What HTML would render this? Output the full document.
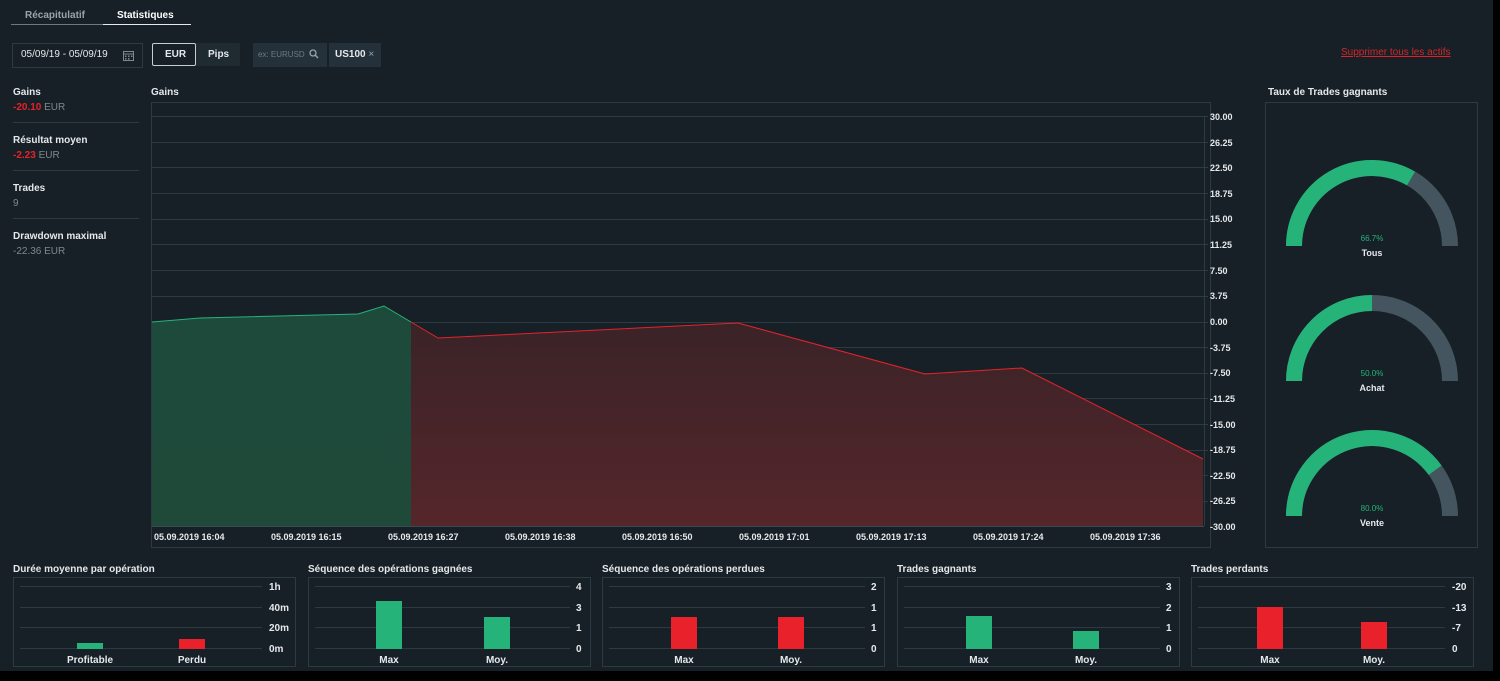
<!DOCTYPE html><html><head><meta charset="utf-8"><style>
body{margin:0;width:1500px;height:681px;background:#000;font-family:"Liberation Sans",sans-serif;overflow:hidden;position:relative}
#pg{position:absolute;left:0;top:0;width:1493px;height:671px;background:#172026}
.a{position:absolute;white-space:nowrap}
.w{color:#e6e9eb;font-weight:bold;font-size:10px}
.g{color:#7d888f;font-size:10px}
.r{color:#e8212a;font-weight:bold;font-size:10px}
.box{position:absolute;border:1px solid #2c3a42}
.sep{position:absolute;left:13px;width:126px;height:1px;background:#2c3a42}
</style></head><body><div id="pg">
<div class="a" style="left:25px;top:10px;font-size:10px;font-weight:bold;color:#9aa3a9">Récapitulatif</div>
<div class="a" style="left:117px;top:10px;font-size:10px;font-weight:bold;color:#fff">Statistiques</div>
<div class="a" style="left:11px;top:24px;width:92px;height:1px;background:#6d7a82"></div>
<div class="a" style="left:103px;top:24px;width:88px;height:1px;background:#e6e9eb"></div>
<div class="box" style="left:12px;top:43px;width:129px;height:23px"></div>
<div class="a" style="left:21px;top:49px;font-size:10px;color:#e6e9eb">05/09/19 - 05/09/19</div>
<svg class="a" style="left:123px;top:50px" width="11" height="11"><rect x="0.5" y="1.5" width="10" height="9" fill="none" stroke="#7d888f"/><line x1="0" y1="4" x2="11" y2="4" stroke="#7d888f"/><g fill="#7d888f"><rect x="2" y="5.5" width="1.5" height="1.5"/><rect x="5" y="5.5" width="1.5" height="1.5"/><rect x="8" y="5.5" width="1.5" height="1.5"/><rect x="2" y="8" width="1.5" height="1.5"/><rect x="5" y="8" width="1.5" height="1.5"/></g></svg>
<div class="a" style="left:153px;top:43px;width:87px;height:23px;background:#1f2a31;border-radius:2px"></div>
<div class="a" style="left:152px;top:43px;width:42px;height:21px;border:1px solid #c8cdd0;border-radius:2px;background:#172026"></div>
<div class="a w" style="left:165px;top:49px">EUR</div>
<div class="a w" style="left:208px;top:49px">Pips</div>
<div class="a" style="left:253px;top:43px;width:74px;height:24px;background:#25313a"></div>
<div class="a" style="left:258px;top:50px;font-size:8px;color:#6d7a82">ex: EURUSD</div>
<svg class="a" style="left:309px;top:49px" width="10" height="10"><circle cx="4" cy="4" r="3" fill="none" stroke="#9aa3a9" stroke-width="1.3"/><line x1="6.3" y1="6.3" x2="9" y2="9" stroke="#9aa3a9" stroke-width="1.4"/></svg>
<div class="a" style="left:329px;top:43px;width:52px;height:24px;background:#25313a"></div>
<div class="a w" style="left:335px;top:49px">US100 <span style="color:#9aa3a9;font-weight:normal">×</span></div>
<div class="a" style="left:1341px;top:47px;font-size:10px;color:#d4252c;text-decoration:underline">Supprimer tous les actifs</div>

<div class="a w" style="left:13px;top:87px">Gains</div>
<div class="a" style="left:13px;top:102px;font-size:10px"><span class="r">-20.10</span> <span class="g">EUR</span></div>
<div class="sep" style="top:122px"></div>
<div class="a w" style="left:13px;top:135px">Résultat moyen</div>
<div class="a" style="left:13px;top:150px;font-size:10px"><span class="r">-2.23</span> <span class="g">EUR</span></div>
<div class="sep" style="top:170px"></div>
<div class="a w" style="left:13px;top:183px">Trades</div>
<div class="a g" style="left:13px;top:198px">9</div>
<div class="sep" style="top:218px"></div>
<div class="a w" style="left:13px;top:231px">Drawdown maximal</div>
<div class="a g" style="left:13px;top:246px">-22.36 EUR</div>

<div class="a w" style="left:151px;top:87px">Gains</div>
<div class="a w" style="left:1268px;top:87px">Taux de Trades gagnants</div>
<div class="box" style="left:151px;top:102px;width:1058px;height:444px"></div>
<div class="box" style="left:1265px;top:102px;width:1211px;width:211px;height:444px"></div>

<svg class="a" style="left:0;top:0" width="1493" height="671">
<defs><linearGradient id="gg" x1="0" y1="0" x2="0" y2="1"><stop offset="0" stop-color="#1e4a3c"/><stop offset="1" stop-color="#1f4a3a"/></linearGradient>
<linearGradient id="rg" x1="0" y1="0" x2="0" y2="1"><stop offset="0" stop-color="#3a2328"/><stop offset="1" stop-color="#55262a"/></linearGradient></defs>
<g stroke="#2c3a42" stroke-width="1">
<line x1="152" y1="116.5" x2="1208" y2="116.5"/><line x1="152" y1="142.5" x2="1208" y2="142.5"/><line x1="152" y1="167.5" x2="1208" y2="167.5"/><line x1="152" y1="193.5" x2="1208" y2="193.5"/><line x1="152" y1="219.5" x2="1208" y2="219.5"/><line x1="152" y1="244.5" x2="1208" y2="244.5"/><line x1="152" y1="270.5" x2="1208" y2="270.5"/><line x1="152" y1="296.5" x2="1208" y2="296.5"/><line x1="152" y1="322.5" x2="1208" y2="322.5"/><line x1="152" y1="347.5" x2="1208" y2="347.5"/><line x1="152" y1="373.5" x2="1208" y2="373.5"/><line x1="152" y1="398.5" x2="1208" y2="398.5"/><line x1="152" y1="424.5" x2="1208" y2="424.5"/><line x1="152" y1="450.5" x2="1208" y2="450.5"/><line x1="152" y1="475.5" x2="1208" y2="475.5"/><line x1="152" y1="501.5" x2="1208" y2="501.5"/>
<line x1="1204.5" y1="116" x2="1204.5" y2="526"/>
</g>
<path d="M152,322 L200,318 L358,314 L384,306 L411,322 L411,526 L152,526Z" fill="url(#gg)"/>
<path d="M411,322 L438,338 L738,323 L925,374 L1022,368 L1203,459 L1203,526 L411,526Z" fill="url(#rg)"/>
<path d="M152,322 L200,318 L358,314 L384,306 L411,322" fill="none" stroke="#26b37a" stroke-width="1"/>
<path d="M411,322 L438,338 L738,323 L925,374 L1022,368 L1203,459" fill="none" stroke="#e8212a" stroke-width="1"/>
<line x1="152" y1="526.5" x2="1204" y2="526.5" stroke="#3a4850"/>
<g font-size="9" font-weight="bold" fill="#e6e9eb" font-family="Liberation Sans">
<text x="1210" y="120">30.00</text><text x="1210" y="146">26.25</text><text x="1210" y="171">22.50</text><text x="1210" y="197">18.75</text><text x="1210" y="222">15.00</text><text x="1210" y="248">11.25</text><text x="1210" y="274">7.50</text><text x="1210" y="299">3.75</text><text x="1210" y="325">0.00</text><text x="1210" y="351">-3.75</text><text x="1210" y="376">-7.50</text><text x="1210" y="402">-11.25</text><text x="1210" y="428">-15.00</text><text x="1210" y="453">-18.75</text><text x="1210" y="479">-22.50</text><text x="1210" y="504">-26.25</text><text x="1210" y="530">-30.00</text>
<text x="154" y="540">05.09.2019 16:04</text><text x="271" y="540">05.09.2019 16:15</text><text x="388" y="540">05.09.2019 16:27</text><text x="505" y="540">05.09.2019 16:38</text><text x="622" y="540">05.09.2019 16:50</text><text x="739" y="540">05.09.2019 17:01</text><text x="856" y="540">05.09.2019 17:13</text><text x="973" y="540">05.09.2019 17:24</text><text x="1090" y="540">05.09.2019 17:36</text>
</g>
<g fill="none" stroke-width="16">
<path d="M1294,246 A78,78 0 0 1 1450,246" stroke="#44555f"/>
<path d="M1294,246 A78,78 0 0 1 1411,178.5" stroke="#26b37a"/>
<path d="M1294,381 A78,78 0 0 1 1450,381" stroke="#44555f"/>
<path d="M1294,381 A78,78 0 0 1 1372,303" stroke="#26b37a"/>
<path d="M1294,516 A78,78 0 0 1 1450,516" stroke="#44555f"/>
<path d="M1294,516 A78,78 0 0 1 1435.1,470.2" stroke="#26b37a"/>
</g>
<g font-size="8" fill="#26b37a" text-anchor="middle" font-family="Liberation Sans"><text x="1372" y="241">66.7%</text><text x="1372" y="376">50.0%</text><text x="1372" y="511">80.0%</text></g>
<g font-size="9" font-weight="bold" fill="#e6e9eb" text-anchor="middle" font-family="Liberation Sans"><text x="1372" y="256">Tous</text><text x="1372" y="391">Achat</text><text x="1372" y="526">Vente</text></g>
</svg>

<svg class="a" style="left:0;top:555px" width="1493" height="116" font-family="Liberation Sans">
<g font-size="10" font-weight="bold" fill="#e6e9eb">
<text x="13" y="17">Durée moyenne par opération</text><text x="308" y="17">Séquence des opérations gagnées</text><text x="602" y="17">Séquence des opérations perdues</text><text x="897" y="17">Trades gagnants</text><text x="1191" y="17">Trades perdants</text></g>
<g id="frames" fill="none" stroke="#2c3a42">
<rect x="13.5" y="22.5" width="282" height="89"/><rect x="308.5" y="22.5" width="282" height="89"/><rect x="602.5" y="22.5" width="282" height="89"/><rect x="897.5" y="22.5" width="282" height="89"/><rect x="1191.5" y="22.5" width="282" height="89"/>
</g>
<g stroke="#2c3a42">
<line x1="20" x2="262" y1="31.5" y2="31.5"/><line x1="20" x2="262" y1="52.5" y2="52.5"/><line x1="20" x2="262" y1="72.5" y2="72.5"/><line x1="20" x2="262" y1="93.5" y2="93.5"/>
<line x1="315" x2="570" y1="31.5" y2="31.5"/><line x1="315" x2="570" y1="52.5" y2="52.5"/><line x1="315" x2="570" y1="72.5" y2="72.5"/><line x1="315" x2="570" y1="93.5" y2="93.5"/>
<line x1="609" x2="865" y1="31.5" y2="31.5"/><line x1="609" x2="865" y1="52.5" y2="52.5"/><line x1="609" x2="865" y1="72.5" y2="72.5"/><line x1="609" x2="865" y1="93.5" y2="93.5"/>
<line x1="904" x2="1160" y1="31.5" y2="31.5"/><line x1="904" x2="1160" y1="52.5" y2="52.5"/><line x1="904" x2="1160" y1="72.5" y2="72.5"/><line x1="904" x2="1160" y1="93.5" y2="93.5"/>
<line x1="1198" x2="1445" y1="31.5" y2="31.5"/><line x1="1198" x2="1445" y1="52.5" y2="52.5"/><line x1="1198" x2="1445" y1="72.5" y2="72.5"/><line x1="1198" x2="1445" y1="93.5" y2="93.5"/>
</g>
<g fill="#26b37a"><rect x="77" y="88" width="26" height="6"/><rect x="376" y="46" width="26" height="48"/><rect x="484" y="62" width="26" height="32"/><rect x="966" y="61" width="26" height="33"/><rect x="1073" y="76" width="26" height="18"/></g>
<g fill="#e8212a"><rect x="179" y="84" width="26" height="10"/><rect x="671" y="62" width="26" height="32"/><rect x="778" y="62" width="26" height="32"/><rect x="1257" y="52" width="26" height="42"/><rect x="1361" y="67" width="26" height="27"/></g>
<g font-size="10" font-weight="bold" fill="#e6e9eb">
<text x="269" y="35">1h</text><text x="269" y="56">40m</text><text x="269" y="76">20m</text><text x="269" y="97">0m</text>
<text x="576" y="35">4</text><text x="576" y="56">3</text><text x="576" y="76">1</text><text x="576" y="97">0</text>
<text x="871" y="35">2</text><text x="871" y="56">1</text><text x="871" y="76">1</text><text x="871" y="97">0</text>
<text x="1166" y="35">3</text><text x="1166" y="56">2</text><text x="1166" y="76">1</text><text x="1166" y="97">0</text>
<text x="1452" y="35">-20</text><text x="1452" y="56">-13</text><text x="1452" y="76">-7</text><text x="1452" y="97">0</text>
</g>
<g font-size="10" font-weight="bold" fill="#e6e9eb" text-anchor="middle">
<text x="90" y="108">Profitable</text><text x="192" y="108">Perdu</text>
<text x="389" y="108">Max</text><text x="497" y="108">Moy.</text>
<text x="684" y="108">Max</text><text x="791" y="108">Moy.</text>
<text x="979" y="108">Max</text><text x="1086" y="108">Moy.</text>
<text x="1270" y="108">Max</text><text x="1374" y="108">Moy.</text>
</g>
</svg>
</div></body></html>
